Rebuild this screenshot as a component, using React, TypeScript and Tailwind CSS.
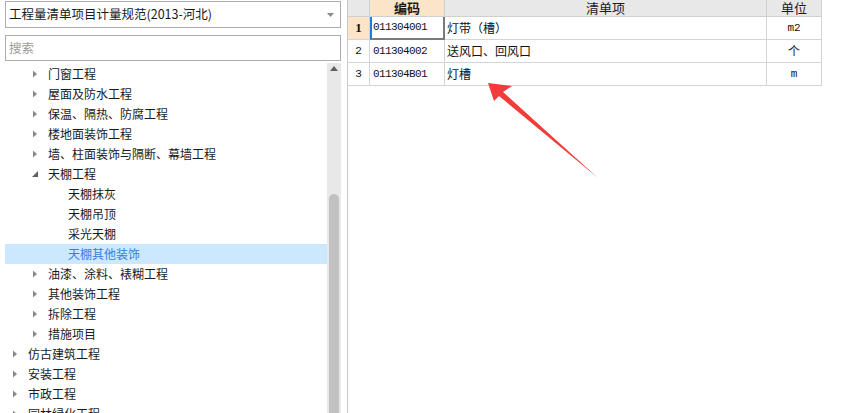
import React from "react";

type Node = { label: string; level: 0 | 1 | 2; state: "closed" | "open" | "leaf"; selected?: boolean };

const tree: Node[] = [
  { label: "门窗工程", level: 1, state: "closed" },
  { label: "屋面及防水工程", level: 1, state: "closed" },
  { label: "保温、隔热、防腐工程", level: 1, state: "closed" },
  { label: "楼地面装饰工程", level: 1, state: "closed" },
  { label: "墙、柱面装饰与隔断、幕墙工程", level: 1, state: "closed" },
  { label: "天棚工程", level: 1, state: "open" },
  { label: "天棚抹灰", level: 2, state: "leaf" },
  { label: "天棚吊顶", level: 2, state: "leaf" },
  { label: "采光天棚", level: 2, state: "leaf" },
  { label: "天棚其他装饰", level: 2, state: "leaf", selected: true },
  { label: "油漆、涂料、裱糊工程", level: 1, state: "closed" },
  { label: "其他装饰工程", level: 1, state: "closed" },
  { label: "拆除工程", level: 1, state: "closed" },
  { label: "措施项目", level: 1, state: "closed" },
  { label: "仿古建筑工程", level: 0, state: "closed" },
  { label: "安装工程", level: 0, state: "closed" },
  { label: "市政工程", level: 0, state: "closed" },
  { label: "园林绿化工程", level: 0, state: "closed" },
];

const indent = { 0: "pl-[7px]", 1: "pl-[27px]", 2: "pl-[47px]" };

const rows = [
  { no: "1", code: "011304001", name: "灯带（槽）", unit: "m2" },
  { no: "2", code: "011304002", name: "送风口、回风口", unit: "个" },
  { no: "3", code: "011304B01", name: "灯槽", unit: "m" },
];

const cjk = "font-['Microsoft_YaHei','Noto_Sans_CJK_SC',sans-serif]";
const mono = "font-['Liberation_Mono','Noto_Sans_CJK_SC',monospace]";

function Toggle({ state }: { state: Node["state"] }) {
  if (state === "closed")
    return (
      <svg width="16" height="8" viewBox="0 0 16 8">
        <polygon points="1,0.5 5,4 1,7.5" fill="#8a8a8a" />
      </svg>
    );
  if (state === "open")
    return (
      <svg width="16" height="8" viewBox="0 0 16 8">
        <polygon points="6,1 6,7 0,7" fill="#5f5f5f" />
      </svg>
    );
  return <span className="w-4" />;
}

export default function App() {
  return (
    <div className={`relative flex h-[413px] w-[858px] overflow-hidden bg-white text-[#1a1a1a] ${cjk}`}>
      {/* left: spec picker + chapter tree */}
      <div className="flex w-[347px] shrink-0 flex-col pl-[5px] pr-[6px]">
        <div className="mt-[1px] flex h-[27px] items-center justify-between border border-[#acacac] pl-[3px] pr-[6px] text-[12.5px]">
          <span>工程量清单项目计量规范(2013-河北)</span>
          <svg width="7" height="4" viewBox="0 0 7 4">
            <polygon points="0,0 7,0 3.5,4" fill="#8a8a8a" />
          </svg>
        </div>
        <div className="mt-[7px] flex h-[26px] items-center border border-[#acacac] pl-[3px] text-[12.5px] text-[#9a9a9a]">
          搜索
        </div>
        <div className="mt-[2px] flex min-h-0 flex-1">
          <div className="flex-1 pt-px">
            {tree.map((n) => (
              <div
                key={n.label}
                className={`flex h-5 items-center text-[12px] ${indent[n.level]} ${
                  n.selected ? "bg-[#cce8ff] text-[#3b7ddd]" : ""
                }`}
              >
                <Toggle state={n.state} />
                <span className="whitespace-nowrap">{n.label}</span>
              </div>
            ))}
          </div>
          <div className="flex w-[14px] flex-col items-center bg-[#e8e8e8]">
            <svg width="8" height="5" viewBox="0 0 8 5" className="mt-[3px]">
              <polygon points="0,5 8,5 4,0" fill="#606060" />
            </svg>
            <div className="mt-[123px] w-[10px] flex-1 rounded-t-[5px] bg-[#c1c1c1]" />
          </div>
        </div>
      </div>

      {/* right: list of bill items */}
      <div className="flex-1 border-l border-[#c9c9c9]">
        <div className="w-[474px]">
          <div className="flex h-[17px] border-b border-[#cfcfcf] bg-[#e8e8e8] text-[13px] leading-[16px]">
            <div className="w-[22px] border-r border-[#cfcfcf]" />
            <div className="w-[75px] border-r border-[#cfcfcf] bg-[#fce4c8] text-center font-bold">编码</div>
            <div className="w-[322px] border-r border-[#cfcfcf] text-center">清单项</div>
            <div className="w-[55px] border-r border-[#cfcfcf] text-center">单位</div>
          </div>
          {rows.map((r, i) => (
            <div key={r.no} className="flex h-[23px] border-b border-[#d4d4d4] text-[12px] text-[#111]">
              <div
                className={`flex w-[22px] items-center justify-center border-r border-[#d4d4d4] ${
                  i === 0 ? "bg-[#fce4c8] font-['Liberation_Serif',serif] text-[13px] font-bold" : `${mono} text-[11px]`
                }`}
              >
                {r.no}
              </div>
              <div
                className={`flex w-[75px] items-center ${mono} text-[11px] tracking-[-0.6px] ${
                  i === 0
                    ? "-mb-px border-b-2 border-l-2 border-r-2 border-b-[#7a7a7a] border-l-[#1e7ae0] border-r-[#7a7a7a] pl-[1px]"
                    : "border-r border-[#d4d4d4] pl-[3px]"
                }`}
              >
                {r.code}
              </div>
              <div className="flex w-[322px] items-center border-r border-[#d4d4d4] pl-[2px]">{r.name}</div>
              <div
                className={`flex w-[55px] items-center justify-center border-r border-[#d4d4d4] text-[#111] ${
                  r.unit === "个" ? "" : `${mono} text-[11px]`
                }`}
              >
                {r.unit}
              </div>
            </div>
          ))}
        </div>
      </div>

      {/* red annotation arrow */}
      <svg className="pointer-events-none absolute left-0 top-0" width="858" height="413" viewBox="0 0 858 413">
        <polygon points="488,83 512,86 503,92 598,178 499,96 494,101" fill="#f23c3c" />
      </svg>
    </div>
  );
}
